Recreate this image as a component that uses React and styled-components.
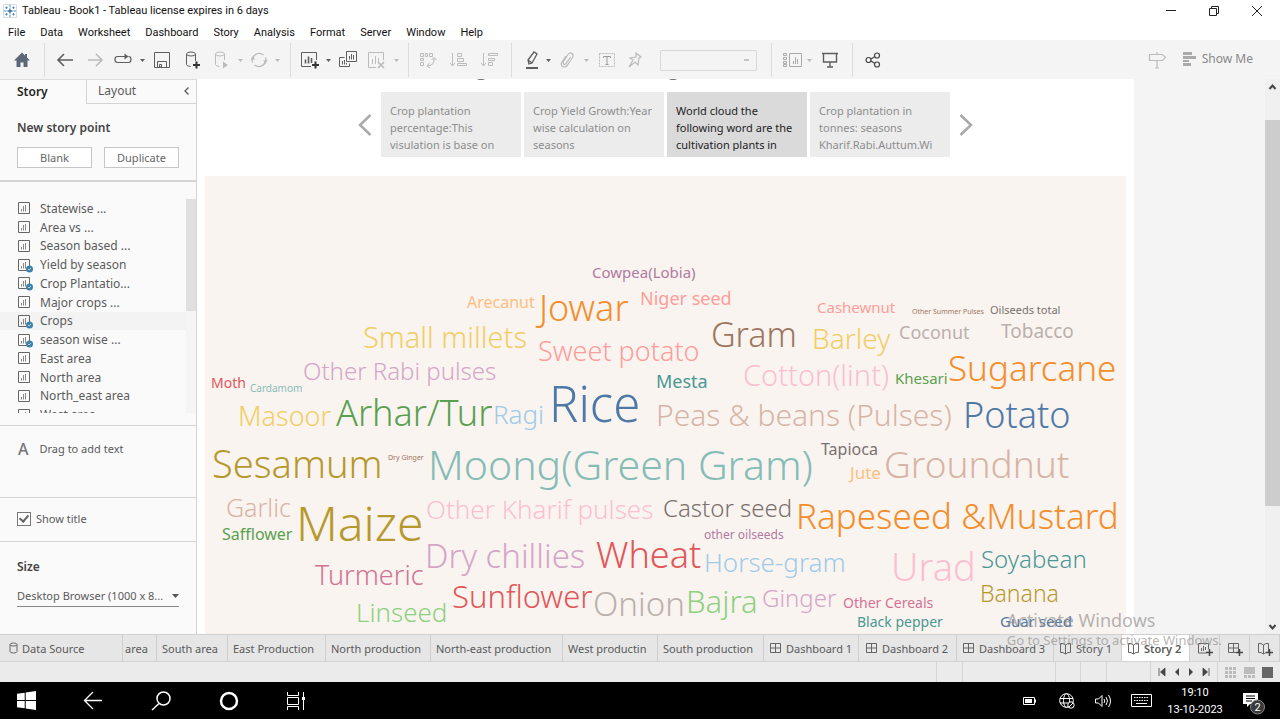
import React from 'react';
import styled, { createGlobalStyle } from 'styled-components';

const Global = createGlobalStyle`
  * { box-sizing: border-box; }
  body { margin: 0; font-family: "Noto Sans", sans-serif; font-size: 11px; color: #5a5a5a; background: #fff; }
  button, select, input { font: inherit; color: inherit; }
  button { border: 0; background: none; padding: 0; }
  ul, h1, h2, p { margin: 0; padding: 0; list-style: none; }
  svg { display: block; flex: none; overflow: visible; }
`;

const Shell = styled.div`
  position: relative;
  display: flex;
  flex-direction: column;
  height: 100vh;
  overflow: hidden;
`;

/* window chrome */
const TitleBar = styled.header`
  display: flex;
  align-items: center;
  height: 22px;
  flex: none;
  padding-left: 3px;
  font: 11px/22px Roboto, sans-serif;
  color: #111;
`;
const Title = styled.h1`
  flex: 1;
  margin-left: 5px;
  font: inherit;
`;
const WindowButton = styled.button`
  display: grid;
  place-items: center;
  width: 43px;
  height: 20px;
  margin-right: ${p => (p.$last ? 2 : 0)}px;
`;
const MenuBar = styled.nav`
  display: flex;
  flex: none;
  gap: 15px;
  height: 18px;
  padding: 2px 0 0 8px;
  font: 11px/18px Roboto, sans-serif;
  color: #111;
`;
const MenuItem = styled.button`
  color: #111;
`;

/* toolbar */
const Toolbar = styled.div`
  display: flex;
  flex: none;
  height: 39px;
  background: #f4f4f4;
  padding: 3px 0 2px;
`;
const Group = styled.div`
  display: flex;
  align-items: center;
  padding: 0 ${p => p.$right || 0}px 0 ${p => p.$left || 0}px;
  border-right: ${p => (p.$last ? 'none' : '1px solid #dcdcdc')};
`;
const Tool = styled.button`
  display: grid;
  place-items: center;
  width: ${p => p.$w || 30}px;
  height: 28px;
  color: ${p => (p.$off ? '#bbb' : p.$tone || '#5e5e5e')};
`;
const Fit = styled.select`
  appearance: none;
  width: 97px;
  height: 21px;
  margin-left: 12px;
  border: 1px solid #d8d8d8;
  border-radius: 1px;
  background: #f4f4f4 linear-gradient(#c4c4c4, #c4c4c4) no-repeat right 7px center / 5px 2px;
`;
const Spacer = styled.div`flex: 1;`;
const ShowMe = styled.button`
  display: flex;
  align-items: center;
  gap: 6px;
  margin: 0 27px 0 11px;
  font-size: 12px;
  line-height: 16px;
  padding-bottom: 2px;
  color: #888;
`;

/* work area */
const Work = styled.div`
  display: flex;
  flex: 1;
  min-height: 0;
`;
const Side = styled.aside`
  display: flex;
  flex-direction: column;
  width: 197px;
  flex: none;
  background: #fafafa;
  border-top: 1px solid #dcdcdc;
  border-right: 1px solid #d4d4d4;
`;
const SideTabs = styled.div`
  display: flex;
  height: 24px;
`;
const SideTab = styled.button`
  display: flex;
  align-items: center;
  justify-content: space-between;
  flex: ${p => (p.$active ? '0 0 86px' : '1')};
  padding: 0 6px 2px ${p => (p.$active ? 17 : 11)}px;
  border: solid #d4d4d4;
  border-width: ${p => (p.$active ? '0' : '0 0 1px 1px')};
  font-size: 12px;
  font-weight: ${p => (p.$active ? 600 : 400)};
  color: ${p => (p.$active ? '#222' : '#5a5a5a')};
`;
const SideSection = styled.section`
  height: ${p => p.$h ? p.$h + 'px' : 'auto'};
  flex: ${p => (p.$h ? 'none' : '1')};
  padding: ${p => p.$pad || '0 17px'};
  border-bottom: ${p => (p.$h ? `${p.$line || 1}px solid #d4d4d4` : 'none')};
`;
const SideHeading = styled.h2`
  font-size: 12px;
  line-height: 16px;
  font-weight: 600;
  color: #444;
`;
const ButtonRow = styled.div`
  display: flex;
  justify-content: space-between;
  margin-top: 11px;
`;
const OutlineButton = styled.button`
  width: 75px;
  height: 21px;
  border: 1px solid #c6c6c6;
  background: #fff;
  font-size: 11px;
  line-height: 17px;
  color: #666;
`;
const ListFrame = styled.div`
  display: flex;
  height: 214px;
  overflow: hidden;
`;
const SheetList = styled.ul`
  flex: 1;
  display: grid;
  grid-template-rows: repeat(12, 1fr);
  height: 225px;
`;
const SheetRow = styled.li`
  display: flex;
  align-items: center;
  gap: 7px;
  padding-left: 18px;
  font-size: 12px;
  color: #5a5a5a;
  background: ${p => (p.$active ? '#f3f3f3' : 'transparent')};
`;
const ListScroll = styled.div`
  width: 10px;
  background: #f5f5f5;
  &::before { content: ''; display: block; height: 112px; background: #e0e0e0; }
`;
const DragText = styled.div`
  display: flex;
  align-items: center;
  gap: 11px;
  line-height: 18px;
`;
const Letter = styled.span`
  font-size: 16px;
  font-weight: 500;
  color: #777;
`;
const CheckLabel = styled.label`
  display: flex;
  align-items: center;
  gap: 5px;
`;
const Check = styled.input`
  appearance: none;
  display: grid;
  place-items: center;
  width: 14px;
  height: 14px;
  margin: 0;
  border: 1px solid #777;
  background: #fff;
  &:checked::before {
    content: '';
    width: 4px;
    height: 7px;
    margin-top: -2px;
    border: solid #666;
    border-width: 0 2px 2px 0;
    transform: rotate(40deg);
  }
`;
const SizeBox = styled.div`
  position: relative;
  margin-top: 10px;
`;
const SizeSelect = styled.select`
  appearance: none;
  width: 100%;
  height: 22px;
  padding: 0;
  border: 0;
  border-bottom: 1px solid #888;
  background: transparent;
  color: #5a5a5a;
`;
const SizeCaret = styled.svg`
  position: absolute;
  right: 0;
  top: 9px;
  pointer-events: none;
`;

/* story canvas */
const Canvas = styled.main`
  flex: 1;
  display: flex;
  min-width: 0;
  overflow: hidden;
  background: #f4f4f4;
`;
const Story = styled.div`
  display: flex;
  flex-direction: column;
  flex: 1;
  margin-right: 131px;
  padding: 0 8px;
  background: #fff;
`;
const Descenders = styled.svg`
  align-self: center;
  margin-right: 177px;
`;
const Navigator = styled.div`
  display: flex;
  justify-content: center;
  align-items: center;
  gap: 9px;
  margin: 12px 0 19px;
`;
const Points = styled.div`
  display: flex;
  gap: 3px;
`;
const Point = styled.button`
  width: 140px;
  height: 65px;
  padding: 0 0 0 9px;
  overflow: hidden;
  display: flex;
  align-items: center;
  text-align: left;
  white-space: pre-line;
  font-size: 11px;
  line-height: 17px;
  background: ${p => (p.$active ? '#dadada' : '#ececec')};
  color: ${p => (p.$active ? '#222' : '#8c8c8c')};
  > span { display: block; height: 49px; margin-top: 4px; overflow: hidden; }
`;
const Cloud = styled.div`
  position: relative;
  flex: 1;
  overflow: hidden;
  background: #faf4f0;
`;
const Word = styled.span`
  position: absolute;
  line-height: 1;
  white-space: nowrap;
  font-weight: ${p => (p.$light ? 300 : 400)};
`;
const Scrollbar = styled.div`
  display: flex;
  flex-direction: column;
  justify-content: space-between;
  align-items: center;
  width: 15px;
  flex: none;
  padding: 5px 0 4px;
  background: linear-gradient(#cdcdcd, #cdcdcd) no-repeat 0 41px / 100% 386px #f0f0f0;
`;

/* sheet tabs and status */
const Sheets = styled.div`
  display: flex;
  flex: none;
  height: 28px;
  background: #e6e6e6;
  border-top: 1px solid #d0d0d0;
  border-bottom: 1px solid #d4d4d4;
`;
const Sheet = styled.button`
  display: flex;
  align-items: center;
  gap: 4px;
  flex: 0 1 ${p => p.$w}px;
  padding-left: ${p => p.$pad || 5}px;
  overflow: hidden;
  white-space: nowrap;
  border-right: 1px solid #cfcfcf;
  background: ${p => (p.$active ? '#fff' : 'transparent')};
  font-weight: ${p => (p.$active ? 600 : 400)};
  color: #5a5a5a;
`;
const Status = styled.div`
  display: flex;
  justify-content: flex-end;
  flex: none;
  height: 20px;
  background: #ebebeb;
`;
const StatusCell = styled.div`
  display: flex;
  align-items: center;
  justify-content: space-evenly;
  width: ${p => p.$w}px;
  border-left: 1px solid #d4d4d4;
`;

const Watermark = styled.div`
  position: absolute;
  right: 58px;
  bottom: 70px;
  pointer-events: none;
  color: rgba(140, 138, 136, 0.65);
`;
const WatermarkTitle = styled.p`
  font-size: 18px;
  line-height: 24px;
`;
const WatermarkText = styled.p`
  font-size: 13px;
  line-height: 17px;
`;

/* taskbar */
const Taskbar = styled.footer`
  display: flex;
  align-items: center;
  flex: none;
  height: 37px;
  padding-right: 1px;
  background: #000;
  color: #fff;
`;
const TaskButton = styled.button`
  display: grid;
  place-items: center;
  width: ${p => p.$w}px;
  height: 37px;
  color: #fff;
`;
const Clock = styled.div`
  width: 68px;
  text-align: center;
  font: 11px/17px Roboto, sans-serif;
`;

const C = {
  blue: '#4e79a7', sky: '#a0cbe8', orange: '#f28e2b', peach: '#ffbe7d', green: '#59a14f', lime: '#8cd17d',
  olive: '#b6992d', yellow: '#f1ce63', teal: '#499894', mint: '#86bcb6', red: '#e15759', salmon: '#ff9d9a',
  slate: '#79706e', grey: '#bab0ac', rose: '#d37295', pink: '#fabfd2', plum: '#b07aa1', lilac: '#d4a6c8',
  brown: '#9d7660', tan: '#d7b5a6',
};

/* text, left, baseline, size, colour: measured inside the cloud panel */
const words = [
  ['Cowpea(Lobia)', 387, 102, 15, C.plum],
  ['Arecanut', 262, 132, 16, C.peach],
  ['Jowar', 334, 145, 36, C.orange],
  ['Niger seed', 435, 128, 18, C.salmon],
  ['Small millets', 158, 171, 29, C.yellow],
  ['Sweet potato', 333, 184, 27, C.salmon],
  ['Other Rabi pulses', 98, 204, 24, C.lilac],
  ['Moth', 6, 212, 14, C.red],
  ['Cardamom', 45, 216, 10, C.mint],
  ['Masoor', 33, 249, 27, C.yellow],
  ['Arhar/Tur', 131, 250, 36, C.green],
  ['Ragi', 288, 247, 26, C.sky],
  ['Rice', 344, 245, 49, C.blue],
  ['Mesta', 451, 211, 18, C.teal],
  ['Cashewnut', 612, 137, 15, C.salmon],
  ['Other Summer Pulses', 707, 138, 7, C.brown],
  ['Oilseeds total', 785, 137, 11, C.slate],
  ['Coconut', 694, 162, 18, C.grey],
  ['Tobacco', 796, 162, 19, C.grey],
  ['Gram', 506, 170, 34, C.brown],
  ['Barley', 607, 172, 28, C.yellow],
  ['Cotton(lint)', 538, 209, 29, C.pink],
  ['Khesari', 690, 208, 15, C.green],
  ['Sugarcane', 743, 204, 35, C.orange],
  ['Peas & beans (Pulses)', 451, 250, 30, C.tan],
  ['Potato', 758, 252, 36, C.blue],
  ['Sesamum', 7, 301, 38, C.olive],
  ['Dry Ginger', 183, 284, 7, C.brown],
  ['Moong(Green Gram)', 223, 303, 41, C.mint],
  ['Tapioca', 616, 279, 16, C.slate],
  ['Jute', 645, 303, 17, C.peach],
  ['Groundnut', 679, 301, 37, C.tan],
  ['Garlic', 21, 340, 25, C.tan],
  ['Maize', 91, 364, 48, C.olive],
  ['Other Kharif pulses', 221, 342, 26, C.pink],
  ['Castor seed', 458, 341, 24, C.slate],
  ['Rapeseed &Mustard', 591, 352, 35, C.orange],
  ['Safflower', 17, 364, 16, C.green],
  ['other oilseeds', 499, 363, 12, C.plum],
  ['Dry chillies', 220, 391, 33, C.lilac],
  ['Wheat', 391, 392, 36, C.red],
  ['Horse-gram', 499, 395, 26, C.sky],
  ['Urad', 686, 404, 38, C.pink],
  ['Soyabean', 776, 392, 24, C.teal],
  ['Turmeric', 110, 408, 27, C.rose],
  ['Linseed', 151, 445, 26, C.lime],
  ['Sunflower', 247, 432, 31, C.red],
  ['Onion', 388, 439, 33, C.grey],
  ['Bajra', 481, 437, 31, C.lime],
  ['Ginger', 557, 431, 24, C.lilac],
  ['Other Cereals', 638, 432, 14, C.rose],
  ['Banana', 775, 426, 23, C.olive],
  ['Black pepper', 652, 451, 14, C.teal],
  ['Guar seed', 795, 451, 15, C.blue],
];

const sheets = [
  ['Statewise ...'], ['Area vs ...'], ['Season based ...'], ['Yield by season', 1], ['Crop Plantatio...', 1],
  ['Major crops ...'], ['Crops', 1, 1], ['season wise ...', 1], ['East area'], ['North area'],
  ['North_east area'], ['West area'],
];

const points = [
  ['Crop plantation\npercentage:This\nvisulation is base on'],
  ['Crop Yield Growth:Year\nwise calculation on\nseasons'],
  ['World cloud the\nfollowing word are the\ncultivation plants in', true],
  ['Crop plantation in\ntonnes: seasons\nKharif.Rabi.Auttum.Wi'],
];

const line = { fill: 'none', stroke: 'currentColor', strokeWidth: 1 };

const Caret = ({ off }) => (
  <Tool $w={12} $off={off} aria-label="More options">
    <svg width="5" height="3" viewBox="0 0 5 3"><path d="M0 0h5L2.500 3z" fill="currentColor" /></svg>
  </Tool>
);
const Ico = ({ children, s = 20, ...rest }) => <svg width={s} height={s} viewBox={`0 0 ${s} ${s}`} {...line} {...rest}>{children}</svg>;

const SheetIcon = ({ used }) => (
  <svg width="15" height="14" viewBox="0 0 15 14" fill="none" stroke="#666">
    <path d="M.5 1.500h11v11H.500z" />
    <path d="M3.500 8v2.500M5.500 5v5.500M7.500 4v6.500" stroke="#888" />
    {used ? <><circle cx="11.500" cy="11" r="3.500" fill="#3f84a8" stroke="none" /><path d="M10 11l1 1 2-2" stroke="#cfe3ee" strokeWidth=".8" /></> : null}
  </svg>
);
const DashIcon = ({ plus }) => (
  <svg width={plus ? 16 : 12} height="13" viewBox={plus ? '0 0 16 13' : '0 0 12 13'} fill="none" stroke="#666">
    <path d="M.5 1.500h10v9H.500zM5.500 1.500v9M.5 6h10" />
    {plus ? <path d="M11.500 7v7M8 10.500h7" stroke="#444" strokeWidth="1.500" /> : null}
  </svg>
);
const BookIcon = ({ plus }) => (
  <svg width={plus ? 16 : 12} height="13" viewBox={plus ? '0 0 16 13' : '0 0 12 13'} fill="none" stroke="#666">
    <path d="M5.500 3v9M.5 1.500h2.500l2.500 1.500 2.500-1.500h2.500v9H8L5.500 12 3 10.500H.500z" />
    {plus ? <path d="M11.500 7v7M8 10.500h7" stroke="#444" strokeWidth="1.500" /> : null}
  </svg>
);
const ChartAddIcon = () => (
  <svg width="16" height="13" viewBox="0 0 16 13" fill="none" stroke="#666">
    <path d="M8 11H.500V1.500h10V7M3.500 6v3M5.500 4v5M7.500 5v3" />
    <path d="M11.500 7v7M8 10.500h7" stroke="#444" strokeWidth="1.500" />
  </svg>
);

export default function App() {
  return (
    <Shell>
      <Global />
      <TitleBar>
        <svg width="14" height="14" viewBox="0 0 14 14" fill="none" stroke="#4a86b4">
          <path d="M.5.500h13v13H.500z" stroke="#d5dde4" />
          <path d="M7 4.500v5M4.500 7h5" stroke="#2f6fa5" strokeWidth="1.300" />
          <path d="M7 1v2.400M7 10.600V13M1 7h2.400M10.600 7H13M3.500 2.500v2.400M2.300 3.700h2.400M10.500 2.500v2.400M9.300 3.700h2.400M3.500 9.100v2.400M2.300 10.300h2.400M10.500 9.100v2.400M9.300 10.300h2.400" />
        </svg>
        <Title>Tableau - Book1 - Tableau license expires in 6 days</Title>
        <WindowButton aria-label="Minimise"><svg width="10" height="10" viewBox="0 0 10 10" stroke="#222"><path d="M0 4.500h10" /></svg></WindowButton>
        <WindowButton aria-label="Restore"><svg width="10" height="10" viewBox="0 0 10 10" stroke="#222" fill="none"><path d="M.5 2.500h7v7h-7zM2.500 2.500v-2h7v7h-2" /></svg></WindowButton>
        <WindowButton $last aria-label="Close"><svg width="10" height="10" viewBox="0 0 10 10" stroke="#222"><path d="M0 0l10 10M10 0L0 10" /></svg></WindowButton>
      </TitleBar>
      <MenuBar>
        {['File', 'Data', 'Worksheet', 'Dashboard', 'Story', 'Analysis', 'Format', 'Server', 'Window', 'Help'].map(m => <MenuItem key={m}>{m}</MenuItem>)}
      </MenuBar>

      <Toolbar>
        <Group>
          <Tool $w={44} $tone="#5c6878" aria-label="Home"><Ico><path d="M10 2.500L2 10.500h2.500V17h4v-4.500h3V17h4v-6.500H18l-3-3V4h-2v1.500z" fill="currentColor" stroke="none" /></Ico></Tool>
        </Group>
        <Group $left={5} $right={7}>
          <Tool aria-label="Undo"><Ico strokeWidth="1.600"><path d="M18 10H3M9 4l-6 6 6 6" /></Ico></Tool>
          <Tool $off aria-label="Redo"><Ico strokeWidth="1.600"><path d="M3 10h14M11 4l6 6-6 6" /></Ico></Tool>
          <Tool $w={26} aria-label="Replay"><Ico strokeWidth="1.200"><path d="M13 6.500H4.500q-2.500 0-2.500 3t2.500 3h11q2.500 0 2.500-3t-2.500-3" /><path d="M11.500 3.500l4 3-4 3z" fill="currentColor" stroke="none" /></Ico></Tool>
          <Caret />
          <Tool $w={28} aria-label="Save"><Ico><path d="M2.500 2.500h15v15h-15zM5.500 17v-5.500h9V17M7.500 14.500h2v2.500h-2z" /></Ico></Tool>
          <Tool $w={32} aria-label="New data source"><Ico><ellipse cx="9" cy="4" rx="4.500" ry="2" /><path d="M4.500 4v10.500q0 1.500 4 2M13.500 4v7" /><path d="M14.500 11.500v7M11 15h7" strokeWidth="2" stroke="#333" /></Ico></Tool>
          <Tool $w={26} $off aria-label="Pause updates"><Ico><ellipse cx="9" cy="4" rx="4.500" ry="2" /><path d="M4.500 4v10.500q0 1.500 4 2M13.500 4v6" /><path d="M12 11.500l5 3.500-5 3.500z" fill="currentColor" stroke="none" /></Ico></Tool>
          <Caret off />
          <Tool $w={25} $off aria-label="Refresh"><Ico strokeWidth="1.300"><path d="M3.500 12.500A7 7 0 0 1 14.500 5M16.500 7.500A7 7 0 0 1 5.500 15" /><path d="M1.500 9.500h4.500l-2-3zM14 10.500h4.500l-2 3z" fill="currentColor" stroke="none" /></Ico></Tool>
          <Caret off />
        </Group>
        <Group $left={7} $right={6}>
          <Tool $w={24} aria-label="New worksheet"><Ico><path d="M11 16.500H1.500v-14h15V10" /><path d="M5.500 9.500v4M8.500 6.500v7M11.500 8v5" strokeWidth="1.600" /><path d="M15.500 11.500v7M12 15h7" strokeWidth="2" stroke="#333" /></Ico></Tool>
          <Caret />
          <Tool $w={28} aria-label="Duplicate"><Ico><path d="M8.500 1.500h10v10h-10zM11.500 6v3.500M13.500 4v5.500M15.500 5v4.500M6.500 7.500h-5v9h10v-3M4.500 11v3.500M6.500 10v4.500M8.500 13v1.500" /></Ico></Tool>
          <Tool $w={28} $off aria-label="Clear sheet"><Ico><path d="M10 17.500H2.500v-15h15V10M6.500 9v5M9.500 6v8M12.500 8v4" /><path d="M12 12l6 6M18 12l-6 6" strokeWidth="1.600" /></Ico></Tool>
          <Caret off />
        </Group>
        <Group $left={4} $right={6}>
          <Tool $off aria-label="Swap rows and columns"><Ico><path d="M2.500 3.500h3v3h-3zM7.500 3.500h2v3h-2zM11.500 3.500h3v3h-3zM2.500 8.500h3v2h-3zM2.500 12.500h3v3h-3zM16 8q1 7-6 8M13.500 10l2.500-2.500 2.500 2.500M11.500 13L9 16l3 2" /></Ico></Tool>
          <Tool $w={32} $off aria-label="Sort ascending"><Ico><path d="M3.500 3v13M1 13l2.500 3L6 13M8.500 3.500h4v3h-4zM8.500 8.500h6v3h-6zM8.500 13.500h9v2h-9z" /></Ico></Tool>
          <Tool $off aria-label="Sort descending"><Ico><path d="M3.500 3v13M1 13l2.500 3L6 13M8.500 3.500h9v2h-9zM8.500 8.500h6v2h-6zM8.500 12.500h4v3h-4z" /></Ico></Tool>
        </Group>
        <Group $left={10} $right={14}>
          <Tool $w={20} aria-label="Highlight"><Ico><path d="M7 14l-1-4 6-8 3 2-5 9zM6 10l4 3" strokeWidth="1.300" /><path d="M4 18h12" strokeWidth="2" /></Ico></Tool>
          <Caret />
          <Tool $w={26} $off aria-label="Group members"><Ico strokeWidth="1.200"><path d="M13.500 7l-4.500 6.500q-1.500 1.500-2.500.500t0-2.500L11 4.500q2-2.500 4-1t.5 4L10.500 15q-2.500 3-5 1.500T5 12l4-6" /></Ico></Tool>
          <Caret off />
          <Tool $off aria-label="Show mark labels"><Ico><path d="M2.500 3.500h15v13h-15z" strokeDasharray="2 1" /><path d="M6.500 8V6.500h7V8M10 6.500v8M8.500 14.500h3" stroke="#999" /></Ico></Tool>
          <Tool $w={26} $off aria-label="Fix axes"><Ico strokeWidth="1.200"><path d="M11 3l5 4-2 1-1 7-3-3-6 5 4-7-3-2 6-1z" /></Ico></Tool>
          <Fit aria-label="Fit" />
        </Group>
        <Group $left={9} $right={7}>
          <Tool $w={22} $tone="#aaa" aria-label="Show cards"><Ico><path d="M7.500 3.500h12v13h-12zM11.500 11v3M13.500 7v7M15.500 9v5" /><path d="M1.500 3.500h3v2h-3zM1.500 7.500h3v2h-3zM1.500 11.500h3v2h-3zM1.500 14.500h3v2h-3z" /></Ico></Tool>
          <Caret off />
          <Tool aria-label="Presentation mode"><Ico strokeWidth="1.400"><path d="M2 3.500h16M3.500 4v8h13V4M10 12v5M7 17h6" /></Ico></Tool>
        </Group>
        <Group $left={5} $last>
          <Tool $tone="#444" aria-label="Share"><Ico strokeWidth="1.200"><circle cx="5.500" cy="10" r="2.500" /><circle cx="14" cy="5.500" r="2.500" /><circle cx="14" cy="14.500" r="2.500" /><path d="M8 9l4-2.500M8 11l4 2.500" /></Ico></Tool>
        </Group>
        <Spacer />
        <Group $last>
          <Tool $off aria-label="Data guide"><Ico strokeWidth="1.200"><path d="M2.500 4.500h13l3 3-3 3h-13zM10 2v2.500M10 10.500V18M8 18h4" /></Ico></Tool>
          <ShowMe>
            <svg width="13" height="14" viewBox="0 0 13 14" fill="#aaa"><path d="M0 0h9v3H0zM0 4h13v3H0zM0 8h6v2H0zM0 11h8v3H0z" /></svg>
            Show Me
          </ShowMe>
        </Group>
      </Toolbar>

      <Work>
        <Side>
          <SideTabs>
            <SideTab $active>Story</SideTab>
            <SideTab>Layout<svg width="6" height="8" viewBox="0 0 6 8" {...line} strokeWidth="1.300"><path d="M4.500.500L1 4l3.500 3.500" /></svg></SideTab>
          </SideTabs>
          <SideSection $h={78} $line={2} $pad="16px 17px 0">
            <SideHeading>New story point</SideHeading>
            <ButtonRow>
              <OutlineButton>Blank</OutlineButton>
              <OutlineButton>Duplicate</OutlineButton>
            </ButtonRow>
          </SideSection>
          <SideSection $h={244} $pad="17px 0 0">
            <ListFrame>
              <SheetList>
                {sheets.map(([name, used, active]) => <SheetRow key={name} $active={active}><SheetIcon used={used} />{name}</SheetRow>)}
              </SheetList>
              <ListScroll />
            </ListFrame>
          </SideSection>
          <SideSection $h={72} $pad="14px 18px 0"><DragText><Letter>A</Letter>Drag to add text</DragText></SideSection>
          <SideSection $h={44} $pad="13px 17px 0"><CheckLabel><Check type="checkbox" defaultChecked />Show title</CheckLabel></SideSection>
          <SideSection $pad="17px 17px 0">
            <SideHeading>Size</SideHeading>
            <SizeBox>
              <SizeSelect aria-label="Size"><option>Desktop Browser (1000 x 8...</option></SizeSelect>
              <SizeCaret width="7" height="4" viewBox="0 0 7 4"><path d="M0 0h7L3.500 4z" fill="#555" /></SizeCaret>
            </SizeBox>
          </SideSection>
        </Side>

        <Canvas>
          <Story>
            <Descenders width="200" height="1" viewBox="0 0 200 1" fill="#777"><path d="M0 0h8l-2 1H2zM192 0h8l-2 1h-4z" /></Descenders>
            <Navigator>
              <button aria-label="Previous"><svg width="14" height="22" viewBox="0 0 14 22" fill="none" stroke="#a9a9a9" strokeWidth="2.500"><path d="M12.500 1L2 11l10.500 10" /></svg></button>
              <Points>{points.map(([t, a], i) => <Point key={i} $active={a}><span>{t}</span></Point>)}</Points>
              <button aria-label="Next"><svg width="14" height="22" viewBox="0 0 14 22" fill="none" stroke="#a9a9a9" strokeWidth="2.500"><path d="M1.500 1L12 11 1.500 21" /></svg></button>
            </Navigator>
            <Cloud>
              {words.map(([text, x, base, size, color]) => (
                <Word key={text} $light={size > 19} style={{ left: x, top: Math.round(base - size * 0.86), fontSize: size, color }}>{text}</Word>
              ))}
            </Cloud>
          </Story>
          <Scrollbar>
            <svg width="7" height="6" viewBox="0 0 7 6" fill="none" stroke="#444" strokeWidth="2"><path d="M.5 5l3-3.500 3 3.500" /></svg>
            <svg width="7" height="6" viewBox="0 0 7 6" fill="none" stroke="#444" strokeWidth="2"><path d="M.5 1l3 3.500 3-3.500" /></svg>
          </Scrollbar>
        </Canvas>
      </Work>

      <Sheets>
        <Sheet $w={123} $pad={9}>
          <svg width="9" height="12" viewBox="0 0 9 12" fill="none" stroke="#666"><ellipse cx="4.500" cy="2.500" rx="3.500" ry="1.500" /><path d="M1 2.500v7q0 1.500 3.500 1.500t3.500-1.500v-7" /></svg>
          Data Source
        </Sheet>
        <Sheet $w={34} $pad={2}>area</Sheet>
        <Sheet $w={71}>South area</Sheet>
        <Sheet $w={98}>East Production</Sheet>
        <Sheet $w={105}>North production</Sheet>
        <Sheet $w={132}>North-east production</Sheet>
        <Sheet $w={95}>West productin</Sheet>
        <Sheet $w={106}>South production</Sheet>
        <Sheet $w={95} $pad={6}><DashIcon />Dashboard 1</Sheet>
        <Sheet $w={98} $pad={7}><DashIcon />Dashboard 2</Sheet>
        <Sheet $w={97} $pad={6}><DashIcon />Dashboard 3</Sheet>
        <Sheet $w={68} $pad={6}><BookIcon />Story 1</Sheet>
        <Sheet $w={68} $pad={6} $active><BookIcon />Story 2</Sheet>
        <Sheet $w={30} $pad={8} aria-label="New worksheet"><ChartAddIcon /></Sheet>
        <Sheet $w={30} $pad={8} aria-label="New dashboard"><DashIcon plus /></Sheet>
        <Sheet $w={30} $pad={8} aria-label="New story"><BookIcon plus /></Sheet>
      </Sheets>
      <Status>
        <StatusCell $w={26} /><StatusCell $w={93} /><StatusCell $w={25} /><StatusCell $w={26} /><StatusCell $w={44} />
        <StatusCell $w={67}>
          {['M1 0v8M7 0v8L2.500 4z', 'M6 0v8L2 4z', 'M2 0v8l4-4z', 'M7 0v8M1 0v8l4.500-4z'].map((d, i) => (
            <svg key={i} width="8" height="8" viewBox="0 0 8 8" fill="#444" stroke={i % 3 ? 'none' : '#444'} strokeWidth=".8"><path d={d} /></svg>
          ))}
        </StatusCell>
        <StatusCell $w={63}>
          <svg width="11" height="11" viewBox="0 0 11 11" fill="#bbb"><path d="M0 0h3v3H0zM4 0h3v3H4zM8 0h3v3H8zM0 4h3v3H0zM4 4h3v3H4zM8 4h3v3H8zM0 8h3v3H0zM4 8h3v3H4zM8 8h3v3H8z" /></svg>
          <svg width="11" height="11" viewBox="0 0 11 11" fill="#bbb"><path d="M0 0h11v7H0zM0 8h3v3H0zM4 8h3v3H4zM8 8h3v3H8z" /></svg>
          <svg width="11" height="11" viewBox="0 0 11 11" fill="#666"><path d="M0 0h11v11H0z" /></svg>
        </StatusCell>
      </Status>

      <Taskbar>
        <TaskButton $w={52} aria-label="Start"><svg width="19" height="19" viewBox="0 0 19 19" fill="#fff"><path d="M0 2.700l7.700-1V9H0zM8.700 1.500L19 0v9H8.700zM0 10h7.700v7.300l-7.700-1zM8.700 10H19v9L8.700 17.500z" /></svg></TaskButton>
        <TaskButton $w={82} aria-label="Back"><Ico strokeWidth="1.300"><path d="M19 9.500H1.500M10 1L1.500 9.500l8.500 8.500" /></Ico></TaskButton>
        <TaskButton $w={54} aria-label="Search"><Ico strokeWidth="1.500"><circle cx="12.500" cy="7.500" r="6.500" /><path d="M8 12.500L1 19" /></Ico></TaskButton>
        <TaskButton $w={81} aria-label="Cortana"><Ico strokeWidth="2.500"><circle cx="10" cy="10" r="8" /></Ico></TaskButton>
        <TaskButton $w={54} aria-label="Task view"><Ico><path d="M1.500 1v3.500h11V1M1.500 19v-3.500h11V19M1.500 6.500h11v7h-11zM17.500 1v18" /><path d="M16 6h3v3h-3z" fill="#fff" stroke="none" /></Ico></TaskButton>
        <Spacer />
        <TaskButton $w={37} aria-label="Battery"><svg width="13" height="8" viewBox="0 0 13 8" fill="none" stroke="#fff"><path d="M.5.500h11v7H.500zM12.500 2.500v3" /><path d="M2 2h7v4H2z" fill="#fff" stroke="none" /></svg></TaskButton>
        <TaskButton $w={37} aria-label="Network"><svg width="16" height="16" viewBox="0 0 16 16" fill="none" stroke="#fff"><circle cx="7.500" cy="7.500" r="6.800" /><ellipse cx="7.500" cy="7.500" rx="3" ry="6.800" /><path d="M1 5.500h13M1 10h8" /><circle cx="12" cy="12" r="3.200" fill="#000" /><path d="M10 14l4-4" /></svg></TaskButton>
        <TaskButton $w={37} aria-label="Volume"><svg width="17" height="14" viewBox="0 0 17 14" fill="none" stroke="#fff"><path d="M.5 5h3l3.500-3.500v11L3.500 9h-3zM9 5q1.500 2 0 4M11 3q3 4 0 8M13.500 1q4 6 0 12" /></svg></TaskButton>
        <TaskButton $w={39} aria-label="Keyboard"><svg width="21" height="13" viewBox="0 0 21 13" fill="none" stroke="#fff"><path d="M.5.500h20v12H.500zM5 9.500h11" /><path d="M3 3.500h15M3 6.500h15" strokeDasharray="1.500 1" /></svg></TaskButton>
        <Clock>19:10<br />13-10-2023</Clock>
        <TaskButton $w={50} aria-label="Notifications, 2 new">
          <svg width="22" height="22" viewBox="0 0 22 22">
            <path d="M0 3h15v11H7l-3 3v-3H0z" fill="#fff" /><path d="M3 6h9M3 8.500h9M3 11h6" stroke="#000" />
            <circle cx="14.500" cy="17" r="7" fill="#3a3a3a" stroke="#888" />
            <text x="14.500" y="21" fill="#fff" fontSize="11" fontFamily="Roboto, sans-serif" textAnchor="middle">2</text>
          </svg>
        </TaskButton>
      </Taskbar>

      <Watermark>
        <WatermarkTitle>Activate Windows</WatermarkTitle>
        <WatermarkText>Go to Settings to activate Windows.</WatermarkText>
      </Watermark>
    </Shell>
  );
}
